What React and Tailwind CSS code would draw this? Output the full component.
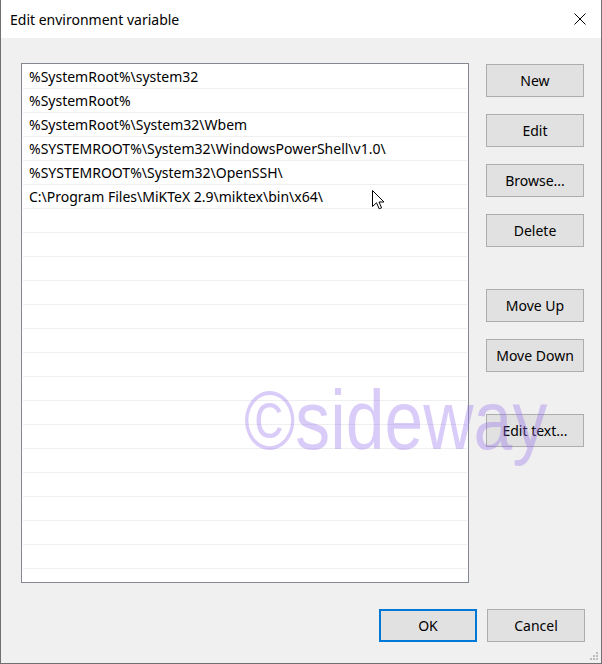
import React from 'react';

const paths = [
    '%SystemRoot%\\system32',
    '%SystemRoot%',
    '%SystemRoot%\\System32\\Wbem',
    '%SYSTEMROOT%\\System32\\WindowsPowerShell\\v1.0\\',
    '%SYSTEMROOT%\\System32\\OpenSSH\\',
    'C:\\Program Files\\MiKTeX 2.9\\miktex\\bin\\x64\\',
];

const Button = ({ children, primary, className = '' }) => (
    <button
        className={`w-[98px] h-[33px] bg-[#e1e1e1] text-[14px] text-black ${primary ? 'border-2 border-[#0078d7]' : 'border border-[#adadad]'} ${className}`}
    >
        {children}
    </button>
);

const App = () => {
    const rows = [...paths, ...Array(16).fill('')];

    return (
        <div className="relative w-[602px] h-[664px] flex flex-col border-x border-b border-[#707070] bg-[#f0f0f0] overflow-hidden" style={{ fontFamily: '"Noto Sans", "Open Sans", sans-serif' }}>
            {/* Title bar */}
            <div className="h-[38px] shrink-0 bg-white flex items-center justify-between pl-[9px] pr-[15px]">
                <span className="text-[14px] text-black">Edit environment variable</span>
                <svg width="12" height="12" viewBox="0 0 12 12">
                    <path d="M0.5 0.5 L11.5 11.5 M11.5 0.5 L0.5 11.5" stroke="#000" strokeWidth="1" />
                </svg>
            </div>

            {/* Body */}
            <div className="flex pl-[20px] pr-[16px] pt-[25px] gap-[17px]">
                <div className="w-[448px] h-[520px] pt-px bg-white border border-[#828790] overflow-hidden">
                    {rows.map((p, i) => (
                        <div key={i} className="h-[24px] mx-px border-b border-[#efefef] flex items-center pl-[6px] text-[14px] text-black whitespace-nowrap">
                            {p}
                        </div>
                    ))}
                </div>
                <div className="flex flex-col pt-px">
                    <Button>New</Button>
                    <Button className="mt-[17px]">Edit</Button>
                    <Button className="mt-[17px]">Browse...</Button>
                    <Button className="mt-[17px]">Delete</Button>
                    <Button className="mt-[42px]">Move Up</Button>
                    <Button className="mt-[17px]">Move Down</Button>
                    <Button className="mt-[42px]">Edit text...</Button>
                </div>
            </div>

            {/* Footer */}
            <div className="flex justify-end gap-[10px] pr-[16px] mt-[26px]">
                <Button primary>OK</Button>
                <Button>Cancel</Button>
            </div>

            {/* Resize grip */}
            <svg className="absolute right-[3px] bottom-[3px]" width="8" height="8" viewBox="0 0 8 8">
                <g fill="#bcbcbc">
                    <rect x="6" y="0" width="2" height="2" />
                    <rect x="3" y="3" width="2" height="2" />
                    <rect x="6" y="3" width="2" height="2" />
                    <rect x="0" y="6" width="2" height="2" />
                    <rect x="3" y="6" width="2" height="2" />
                    <rect x="6" y="6" width="2" height="2" />
                </g>
            </svg>

            {/* Mouse pointer */}
            <svg className="absolute left-[371px] top-[190px]" width="13" height="20" viewBox="0 0 13 20">
                <path d="M0.5 0.5 L0.5 16.5 L4.5 12.8 L7.2 18.8 L9.6 17.8 L7 12 L12 12 Z" fill="#fff" stroke="#000" strokeWidth="1" strokeLinejoin="miter" />
            </svg>

            {/* Watermark */}
            <div className="absolute left-[243px] top-[378px] pointer-events-none select-none text-[84px] leading-none origin-left scale-x-[0.83] text-[rgba(150,110,235,0.35)] whitespace-nowrap" style={{ fontFamily: '"Liberation Sans", Arial, sans-serif' }}>
                ©sideway
            </div>
        </div>
    );
};

export default App;
